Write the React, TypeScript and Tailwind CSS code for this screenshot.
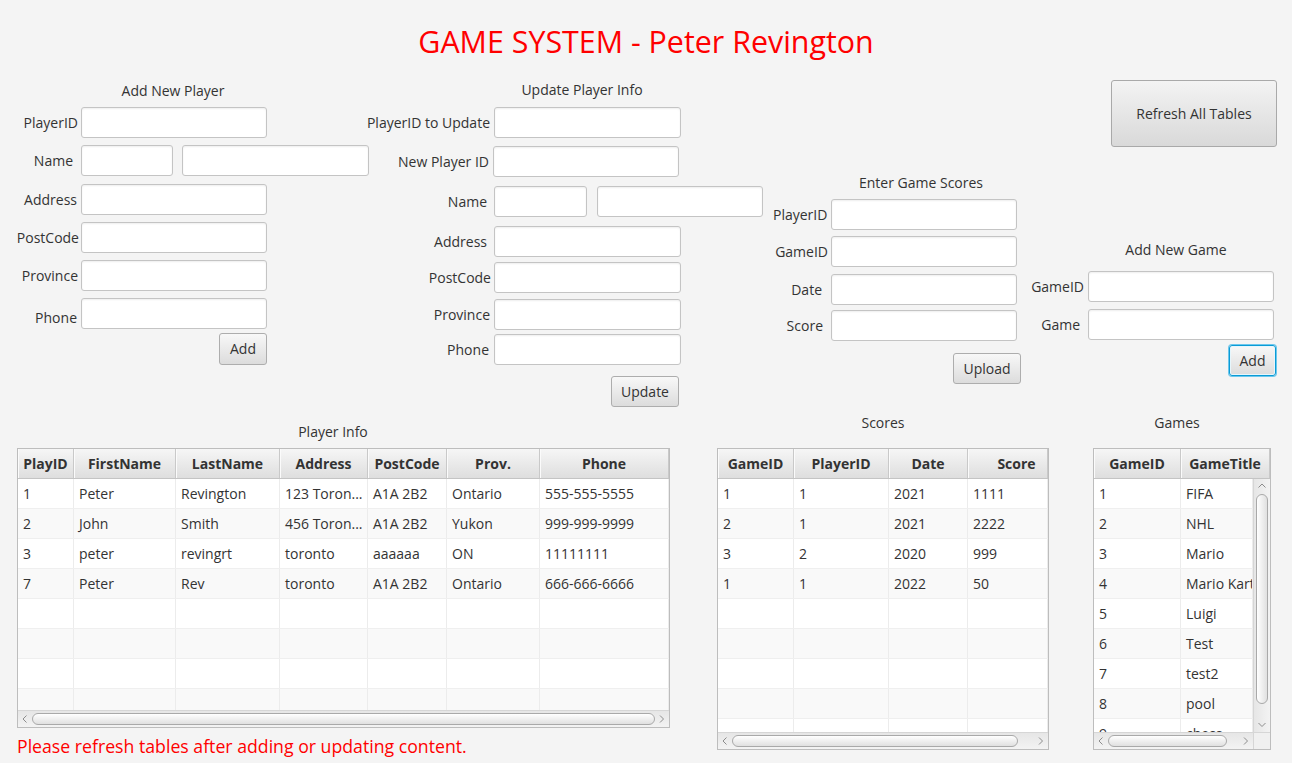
import React from 'react';

type Col = { label: string; w: string; hdr?: string };

const Field = ({ w, cls = '' }: { w: string; cls?: string }) => (
  <input
    type="text"
    className={`${w} ${cls} h-[31px] shrink-0 rounded-[3px] border border-[#c4c4c4] bg-white px-2 text-[14px] outline-none shadow-[inset_0_1px_2px_rgba(0,0,0,0.07)]`}
  />
);

const Btn = ({ cls, children, focus }: { cls: string; children: React.ReactNode; focus?: boolean }) => (
  <button
    className={`${cls} shrink-0 rounded-[3px] border ${
      focus ? 'border-[#0a9bd6] shadow-[0_0_0_1px_#6cc7ec,inset_0_0_0_1px_#e6f6fc]' : 'border-[#adadad]'
    } bg-linear-to-b from-[#f8f8f8] to-[#dcdcdc] text-[14px] leading-none text-[#333]`}
  >
    {children}
  </button>
);

const Row = ({ label, lab, cls, children }: { label: string; lab: string; cls: string; children: React.ReactNode }) => (
  <div className={`flex items-center ${cls}`}>
    <div className={`${lab} shrink-0 whitespace-nowrap text-right`}>{label}</div>
    {children}
  </div>
);

const Chevron = ({ dir }: { dir: 'l' | 'r' | 'u' | 'd' }) => {
  const d = { l: 'M4.5 0.5 L1 4 L4.5 7.5', r: 'M1 0.5 L4.5 4 L1 7.5', u: 'M0.5 4.5 L4 1 L7.5 4.5', d: 'M0.5 1 L4 4.5 L7.5 1' }[dir];
  const horiz = dir === 'l' || dir === 'r';
  return (
    <svg width={horiz ? 6 : 8} height={horiz ? 8 : 6} viewBox={horiz ? '0 0 6 8' : '0 0 8 6'}>
      <path d={d} fill="none" stroke="#8c8c8c" strokeWidth="1" />
    </svg>
  );
};

const Header = ({ cols, h }: { cols: Col[]; h: string }) => (
  <div className={`flex ${h} shrink-0 border-b border-[#c4c4c4] bg-linear-to-b from-[#f6f6f6] to-[#dedede]`}>
    {cols.map((c) => (
      <div
        key={c.label}
        className={`${c.w} ${c.hdr ?? ''} flex shrink-0 items-center justify-center whitespace-nowrap border-r border-[#c9c9c9] font-bold shadow-[inset_1px_0_0_#fbfbfb]`}
      >
        {c.label}
      </div>
    ))}
  </div>
);

const Body = ({ cols, rows, count }: { cols: Col[]; rows: string[][]; count: number }) => (
  <>
    {Array.from({ length: count }).map((_, i) => (
      <div key={i} className={`flex h-[30px] shrink-0 border-b border-[#efefef] ${i % 2 ? 'bg-[#f9f9f9]' : 'bg-white'}`}>
        {cols.map((c, j) => (
          <div key={j} className={`${c.w} flex shrink-0 items-center overflow-hidden whitespace-nowrap border-r border-[#ececec] pl-[5px]`}>
            {rows[i]?.[j] ?? ''}
          </div>
        ))}
      </div>
    ))}
  </>
);

const HScroll = ({ thumb, rest }: { thumb: string; rest: string }) => (
  <div className="flex h-[17px] shrink-0 items-center border-t border-[#d6d6d6] bg-linear-to-b from-[#e6e6e6] to-[#f3f3f3]">
    <div className="flex w-[14px] shrink-0 justify-center">
      <Chevron dir="l" />
    </div>
    <div className={`${thumb} h-[12px] rounded-full border border-[#a9a9a9] bg-linear-to-b from-white to-[#e0e0e0]`} />
    <div className={`${rest} flex justify-end pr-[4px]`}>
      <Chevron dir="r" />
    </div>
  </div>
);

const playerCols: Col[] = [
  { label: 'PlayID', w: 'w-[56px]' },
  { label: 'FirstName', w: 'w-[102px]' },
  { label: 'LastName', w: 'w-[104px]' },
  { label: 'Address', w: 'w-[88px]' },
  { label: 'PostCode', w: 'w-[79px]' },
  { label: 'Prov.', w: 'w-[93px]' },
  { label: 'Phone', w: 'w-[129px]' },
];
const players = [
  ['1', 'Peter', 'Revington', '123 Toron...', 'A1A 2B2', 'Ontario', '555-555-5555'],
  ['2', 'John', 'Smith', '456 Toron...', 'A1A 2B2', 'Yukon', '999-999-9999'],
  ['3', 'peter', 'revingrt', 'toronto', 'aaaaaa', 'ON', '11111111'],
  ['7', 'Peter', 'Rev', 'toronto', 'A1A 2B2', 'Ontario', '666-666-6666'],
];

const scoreCols: Col[] = [
  { label: 'GameID', w: 'w-[76px]' },
  { label: 'PlayerID', w: 'w-[95px]' },
  { label: 'Date', w: 'w-[79px]' },
  { label: 'Score', w: 'w-[80px]', hdr: 'pl-[18px]' },
];
const scores = [
  ['1', '1', '2021', '1111'],
  ['2', '1', '2021', '2222'],
  ['3', '2', '2020', '999'],
  ['1', '1', '2022', '50'],
];

const gameHdr: Col[] = [
  { label: 'GameID', w: 'w-[87px]' },
  { label: 'GameTitle', w: 'w-[89px]' },
];
const gameCols: Col[] = [
  { label: 'GameID', w: 'w-[87px]' },
  { label: 'GameTitle', w: 'w-[72px]' },
];
const games = [
  ['1', 'FIFA'],
  ['2', 'NHL'],
  ['3', 'Mario'],
  ['4', 'Mario Kart'],
  ['5', 'Luigi'],
  ['6', 'Test'],
  ['7', 'test2'],
  ['8', 'pool'],
  ['9', 'chess'],
];

export default function App() {
  return (
    <div className="flex h-[763px] w-[1292px] flex-col overflow-hidden bg-[#f4f4f4] font-['Open_Sans',sans-serif] text-[14px] text-[#333]">
      <div className="mt-[22px] h-[40px] text-center text-[30.4px] leading-[40px] text-[#ff0000]">GAME SYSTEM - Peter Revington</div>

      {/* forms */}
      <div className="flex h-[348px] shrink-0">
        {/* Add New Player */}
        <div className="flex w-[365px] shrink-0 flex-col">
          <div className="mt-[19px] w-[346px] text-center leading-[20px]">Add New Player</div>
          <Row label="PlayerID" lab="w-[81px] pr-[3px]" cls="mt-[6px]">
            <Field w="w-[186px]" />
          </Row>
          <Row label="Name" lab="w-[81px] pr-[8px]" cls="mt-[7px]">
            <Field w="w-[92px]" />
            <Field w="w-[187px]" cls="ml-[9px]" />
          </Row>
          <Row label="Address" lab="w-[81px] pr-[4px]" cls="mt-[8px]">
            <Field w="w-[186px]" />
          </Row>
          <Row label="PostCode" lab="w-[81px] pr-[2px]" cls="mt-[7px]">
            <Field w="w-[186px]" />
          </Row>
          <Row label="Province" lab="w-[81px] pr-[3px]" cls="mt-[7px]">
            <Field w="w-[186px]" />
          </Row>
          <Row label="Phone" lab="w-[81px] pr-[4px] pt-[8px]" cls="mt-[7px]">
            <Field w="w-[186px]" />
          </Row>
          <div className="mt-[4px] flex pl-[219px]">
            <Btn cls="h-[32px] w-[48px]">Add</Btn>
          </div>
        </div>

        {/* Update Player Info */}
        <div className="flex w-[408px] shrink-0 flex-col">
          <div className="mt-[18px] w-[434px] text-center leading-[20px]">Update Player Info</div>
          <Row label="PlayerID to Update" lab="w-[129px] pr-[4px]" cls="mt-[7px]">
            <Field w="w-[187px]" />
          </Row>
          <Row label="New Player ID" lab="w-[128px] pr-[4px]" cls="mt-[8px]">
            <Field w="w-[186px]" />
          </Row>
          <Row label="Name" lab="w-[129px] pr-[7px]" cls="mt-[9px]">
            <Field w="w-[93px]" />
            <Field w="w-[166px]" cls="ml-[10px]" />
          </Row>
          <Row label="Address" lab="w-[129px] pr-[7px]" cls="mt-[9px]">
            <Field w="w-[187px]" />
          </Row>
          <Row label="PostCode" lab="w-[129px] pr-[3px]" cls="mt-[5px]">
            <Field w="w-[187px]" />
          </Row>
          <Row label="Province" lab="w-[129px] pr-[4px]" cls="mt-[6px]">
            <Field w="w-[187px]" />
          </Row>
          <Row label="Phone" lab="w-[129px] pr-[5px]" cls="mt-[4px]">
            <Field w="w-[187px]" />
          </Row>
          <div className="mt-[11px] flex pl-[246px]">
            <Btn cls="h-[31px] w-[68px]">Update</Btn>
          </div>
        </div>

        {/* Enter Game Scores */}
        <div className="flex w-[258px] shrink-0 flex-col">
          <div className="mt-[111px] w-[296px] text-center leading-[20px]">Enter Game Scores</div>
          <Row label="PlayerID" lab="w-[58px] pr-[4px]" cls="mt-[6px]">
            <Field w="w-[186px]" />
          </Row>
          <Row label="GameID" lab="w-[58px] pr-[3px]" cls="mt-[6px]">
            <Field w="w-[186px]" />
          </Row>
          <Row label="Date" lab="w-[58px] pr-[9px]" cls="mt-[7px]">
            <Field w="w-[186px]" />
          </Row>
          <Row label="Score" lab="w-[58px] pr-[8px]" cls="mt-[5px]">
            <Field w="w-[186px]" />
          </Row>
          <div className="mt-[12px] flex pl-[180px]">
            <Btn cls="h-[31px] w-[68px]">Upload</Btn>
          </div>
        </div>

        {/* Refresh + Add New Game */}
        <div className="flex w-[261px] shrink-0 flex-col">
          <div className="mt-[18px] flex pl-[80px]">
            <button className="h-[67px] w-[166px] rounded-[3px] border border-[#a9a9a9] bg-linear-to-b from-[#f3f3f3] to-[#d9d9d9] text-[14px] text-[#333]">
              Refresh All Tables
            </button>
          </div>
          <div className="mt-[93px] w-[290px] text-center leading-[20px]">Add New Game</div>
          <Row label="GameID" lab="w-[57px] pr-[4px]" cls="mt-[11px]">
            <Field w="w-[186px]" />
          </Row>
          <Row label="Game" lab="w-[57px] pr-[8px]" cls="mt-[7px]">
            <Field w="w-[186px]" />
          </Row>
          <div className="mt-[5px] flex pl-[198px]">
            <Btn cls="h-[31px] w-[47px]" focus>
              Add
            </Btn>
          </div>
        </div>
      </div>

      {/* tables */}
      <div className="flex items-start">
        <div className="ml-[17px] flex w-[653px] shrink-0 flex-col">
          <div className="mt-[12px] w-[632px] text-center leading-[20px]">Player Info</div>
          <div className="mt-[6px] flex flex-col border border-[#bdbdbd] bg-white">
            <Header cols={playerCols} h="h-[30px]" />
            <div className="flex h-[231px] flex-col overflow-hidden">
              <Body cols={playerCols} rows={players} count={8} />
            </div>
            <HScroll thumb="flex-1" rest="w-[14px] shrink-0" />
          </div>
          <div className="mt-[7px] whitespace-nowrap text-[17.7px] leading-[22px] text-[#ff0000]">
            Please refresh tables after adding or updating content.
          </div>
        </div>

        <div className="ml-[47px] flex w-[332px] shrink-0 flex-col">
          <div className="mt-[3px] text-center leading-[20px]">Scores</div>
          <div className="mt-[15px] flex flex-col border border-[#bdbdbd] bg-white">
            <Header cols={scoreCols} h="h-[30px]" />
            <div className="flex h-[253px] flex-col overflow-hidden">
              <Body cols={scoreCols} rows={scores} count={9} />
            </div>
            <HScroll thumb="w-[286px] shrink-0" rest="flex-1" />
          </div>
        </div>

        <div className="ml-[44px] flex w-[178px] shrink-0 flex-col">
          <div className="mt-[3px] w-[168px] text-center leading-[20px]">Games</div>
          <div className="mt-[15px] flex flex-col border border-[#bdbdbd] bg-white">
            <Header cols={gameHdr} h="h-[30px]" />
            <div className="flex h-[253px]">
              <div className="flex w-[159px] shrink-0 flex-col overflow-hidden">
                <Body cols={gameCols} rows={games} count={9} />
              </div>
              <div className="flex w-[17px] shrink-0 flex-col items-center border-l border-[#d6d6d6] bg-linear-to-r from-[#e6e6e6] to-[#f3f3f3]">
                <div className="flex h-[14px] items-center">
                  <Chevron dir="u" />
                </div>
                <div className="mt-[1px] h-[210px] w-[12px] rounded-full border border-[#a9a9a9] bg-linear-to-r from-white to-[#e0e0e0]" />
                <div className="flex flex-1 items-end pb-[4px]">
                  <Chevron dir="d" />
                </div>
              </div>
            </div>
            <div className="flex">
              <div className="w-[159px] shrink-0">
                <HScroll thumb="w-[119px] shrink-0" rest="flex-1" />
              </div>
              <div className="h-[17px] w-[17px] shrink-0 border-l border-t border-[#d6d6d6] bg-[#f0f0f0]" />
            </div>
          </div>
        </div>
      </div>
    </div>
  );
}
